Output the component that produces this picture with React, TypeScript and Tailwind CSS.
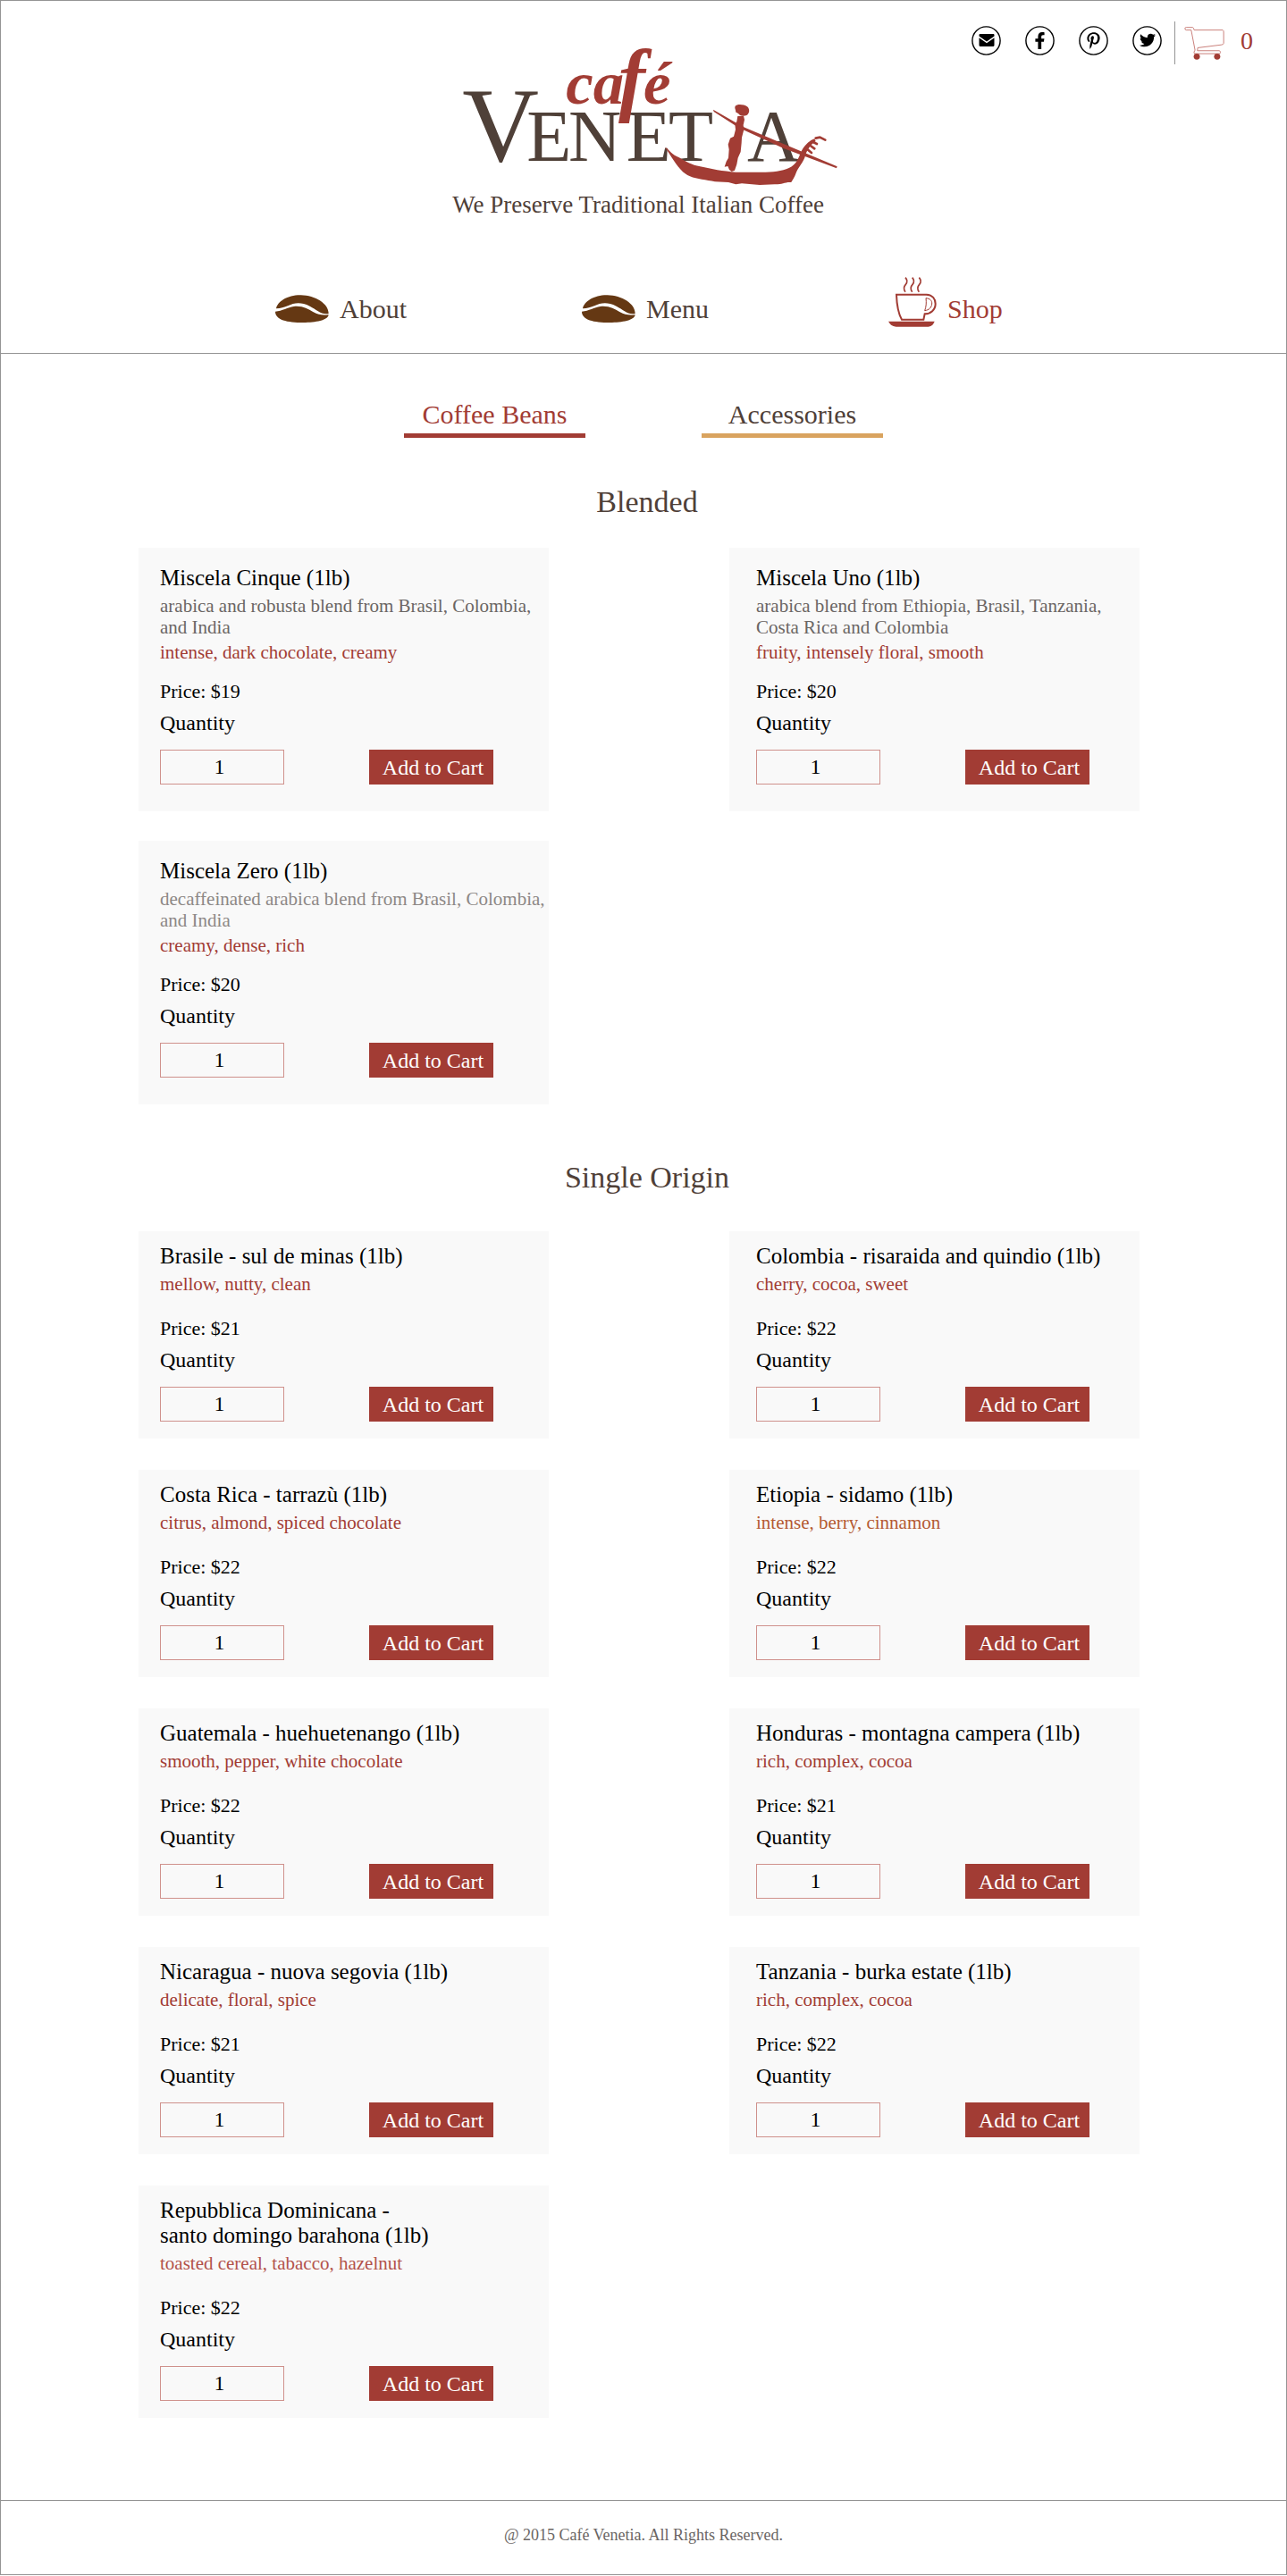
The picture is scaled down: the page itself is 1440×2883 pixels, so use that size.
import React from "react";
import { FaFacebookF, FaPinterestP, FaTwitter } from "react-icons/fa";

type Product = {
  id: string;
  name: string[];
  origin?: string[];
  originTone?: "dark" | "light";
  notes: string;
  notesTone?: "amber" | "soft";
  price: number;
};

const blended: Product[] = [
  {
    id: "cinque",
    name: ["Miscela Cinque (1lb)"],
    origin: ["arabica and robusta blend from Brasil, Colombia,", "and India"],
    notes: "intense, dark chocolate, creamy",
    price: 19,
  },
  {
    id: "uno",
    name: ["Miscela Uno (1lb)"],
    origin: ["arabica blend from Ethiopia, Brasil, Tanzania,", "Costa Rica and Colombia"],
    notes: "fruity, intensely floral, smooth",
    price: 20,
  },
  {
    id: "zero",
    name: ["Miscela Zero (1lb)"],
    origin: ["decaffeinated arabica blend from Brasil, Colombia,", "and India"],
    originTone: "light",
    notes: "creamy, dense, rich",
    price: 20,
  },
];

const singleOrigin: Product[] = [
  { id: "brasile", name: ["Brasile - sul de minas (1lb)"], notes: "mellow, nutty, clean", price: 21 },
  { id: "colombia", name: ["Colombia - risaraida and quindio (1lb)"], notes: "cherry, cocoa, sweet", price: 22 },
  { id: "costa-rica", name: ["Costa Rica - tarrazù (1lb)"], notes: "citrus, almond, spiced chocolate", price: 22 },
  { id: "etiopia", name: ["Etiopia - sidamo (1lb)"], notes: "intense, berry, cinnamon", notesTone: "amber", price: 22 },
  { id: "guatemala", name: ["Guatemala - huehuetenango (1lb)"], notes: "smooth, pepper, white chocolate", price: 22 },
  { id: "honduras", name: ["Honduras - montagna campera (1lb)"], notes: "rich, complex, cocoa", price: 21 },
  { id: "nicaragua", name: ["Nicaragua - nuova segovia (1lb)"], notes: "delicate, floral, spice", price: 21 },
  { id: "tanzania", name: ["Tanzania - burka estate (1lb)"], notes: "rich, complex, cocoa", price: 22 },
  {
    id: "dominicana",
    name: ["Repubblica Dominicana -", "santo domingo barahona (1lb)"],
    notes: "toasted cereal, tabacco, hazelnut",
    notesTone: "soft",
    price: 22,
  },
];

function Logo() {
  return (
    <svg viewBox="0 0 1380 540" className="block w-full" role="img" aria-label="Café Venetia">
      <g fill="#4f4038" fontFamily="'Liberation Serif', serif">
        <text x="82" y="450" fontSize="356">V</text>
        <g fontSize="246">
          <text x="298" y="450">E</text>
          <text x="438" y="450">N</text>
          <text x="632" y="450">E</text>
          <text x="774" y="450">T</text>
          <text x="1038" y="450">A</text>
        </g>
      </g>
      <text y="258" fontSize="206" fontWeight="700" fontStyle="italic" fill="#a23c34" fontFamily="'Liberation Serif', serif">
        <tspan x="430">ca</tspan>
        <tspan x="606" y="266" fontSize="270">
          f
        </tspan>
        <tspan x="690" y="258">
          é
        </tspan>
      </text>
      <g fill="#a23c34">
        <path d="M762 405 C772 407 781 425 800 434 C822 444 842 462 880 469 C920 478 955 485 1000 488 L1060 488 C1110 490 1150 487 1178 474 C1204 462 1210 440 1218 422 C1228 400 1244 384 1264 376 L1268 384 C1250 396 1240 412 1234 430 C1228 455 1212 468 1203 488 C1196 508 1190 514 1186 522 C1165 520 1155 530 1130 529 L1080 531 L1020 526 L1000 529 L975 522 L930 520 C900 514 870 512 846 502 C808 486 790 442 762 405Z" />
        <path d="M924 278 L1000 322 L1030 338 L1165 395 L1340 469 L1338 475 L1160 408 L1028 347 L996 330 L926 285Z" />
        <path d="M998 266 C1004 258 1028 260 1038 268 C1048 276 1046 292 1036 297 C1028 301 1012 300 1009 292 L999 286 C1002 280 994 274 998 266Z" />
        <path d="M1006 300 L1026 299 L1029 312 L1025 330 L1027 345 L1020 372 L1019 390 L1016 420 L1007 440 L1003 462 L996 482 L986 486 L978 480 L973 468 L962 470 L968 452 L975 440 L977 412 L974 395 L981 374 L993 368 L999 345 L997 328 L1003 318Z" />
        <g fill="none" stroke="#a23c34" strokeWidth="8" strokeLinecap="round">
          <path d="M1268 374 L1282 371 L1300 380" />
          <path d="M1254 385 L1272 393" />
          <path d="M1246 396 L1264 409" />
          <path d="M1236 408 L1254 423" />
        </g>
      </g>
    </svg>
  );
}

function BeanIcon() {
  return (
    <svg viewBox="0 0 180 93" className="mb-[5px] block h-[31px] w-[60px]" fill="#653813" aria-hidden="true">
      <path d="M3 46 C8 22 42 0 86 1 C134 2 180 30 179 63 C152 67 140 50 116 38 C84 22 62 28 44 36 C30 42 18 45 3 46Z" />
      <path d="M0 56 C24 54 42 42 62 39 C92 36 108 47 128 58 C144 67 158 69 179 67 C176 86 136 93 94 93 C40 93 0 84 0 56Z" />
    </svg>
  );
}

function CupIcon() {
  return (
    <svg viewBox="0 0 162 168" className="block h-[56px] w-[54px]" fill="none" stroke="#a23c34" aria-hidden="true">
      <path d="M57 2 C66 12 64 18 58 25 C50 34 51 42 57 50" strokeWidth="5" />
      <path d="M80 2 C89 12 87 18 81 25 C73 34 74 42 80 50" strokeWidth="5" />
      <path d="M103 2 C112 12 110 18 104 25 C96 34 97 42 103 50" strokeWidth="5" />
      <path d="M27 59 L128 59 C148 60 158 74 158 90 C158 110 142 124 122 124 L118 143 L45 143 C32 120 28 90 27 59Z" strokeWidth="6" />
      <path d="M126 71 C140 72 147 80 146 90 C145 103 136 111 122 113 C127 100 128 86 126 71Z" strokeWidth="3" />
      <path d="M0 149 L155 149 C152 158 146 165 134 167 L26 167 C12 165 4 158 0 149Z" fill="#a23c34" stroke="none" />
    </svg>
  );
}

function CartIcon() {
  return (
    <svg viewBox="0 0 135 112" className="block h-[37px] w-[45px]" fill="none" stroke="#c9807a" strokeWidth="3" aria-hidden="true">
      <path d="M2 5 Q2 2 6 2 L28 2 Q31 2 33 11 L130 11 Q133 12 133 18 L133 56 Q132 60 126 61 L45 71 L44 81 L118 81 Q122 82 122 86 Q122 91 118 91 L34 91 Q30 86 36 79 L23 11 L6 11 Q2 11 2 5Z" />
      <circle cx="42" cy="101" r="10.5" fill="#a23c34" stroke="none" />
      <circle cx="111" cy="101" r="10.5" fill="#a23c34" stroke="none" />
    </svg>
  );
}

function MailGlyph() {
  return (
    <svg viewBox="0 0 18 14" className="h-[14px] w-[18px]" aria-hidden="true">
      <path d="M1.5 0 H16.5 Q17.5 0 17.5 1.2 V2.6 L9 8.6 L0.5 2.6 V1.2 Q0.5 0 1.5 0Z M0.5 4.2 L9 10.2 L17.5 4.2 V12.5 Q17.5 14 16 14 H2 Q0.5 14 0.5 12.5Z" />
    </svg>
  );
}

function SocialLink({ label, children }: { label: string; children: React.ReactNode }) {
  return (
    <a href="#" aria-label={label} className="grid size-[33px] place-items-center text-black">
      <svg viewBox="0 0 33 33" className="col-start-1 row-start-1 size-[33px]" fill="none" stroke="black" strokeWidth="1.4" aria-hidden="true">
        <circle cx="16.5" cy="16.5" r="15.6" />
      </svg>
      <span className="col-start-1 row-start-1">{children}</span>
    </a>
  );
}

function SiteHeader() {
  return (
    <header className="border-b border-[#949494] pb-[29px]">
      <div className="grid grid-cols-[1fr_460px_1fr]">
        <div />
        <div className="pt-[29px]">
          <a href="#" className="block">
            <Logo />
          </a>
          <p className="mt-[3px] pr-3 text-center text-[27px] leading-8 whitespace-nowrap text-[#4f4038]">
            We Preserve Traditional Italian Coffee
          </p>
        </div>
        <div className="mt-[23px] flex h-12 items-center justify-end pr-[37px]">
          <div className="flex items-center gap-[27px] pb-[6px]">
            <SocialLink label="Email">
              <MailGlyph />
            </SocialLink>
            <SocialLink label="Facebook">
              <FaFacebookF size={19} />
            </SocialLink>
            <SocialLink label="Pinterest">
              <FaPinterestP size={19} />
            </SocialLink>
            <SocialLink label="Twitter">
              <FaTwitter size={18} />
            </SocialLink>
          </div>
          <a href="#" aria-label="Cart, 0 items" className="ml-[14px] flex h-12 items-center border-l border-[#949494] pl-[10px]">
            <CartIcon />
            <span className="ml-[18px] pb-1 text-[28px] leading-8 text-[#a23c34]">0</span>
          </a>
        </div>
      </div>
      <nav className="mt-[65px] grid grid-cols-3 pr-[102px] pl-[307px] text-[30px] leading-9 text-[#4f4038]">
        <a href="#" className="flex h-[56px] items-end gap-3">
          <BeanIcon />
          <span className="mb-[2px]">About</span>
        </a>
        <a href="#" className="flex h-[56px] items-end gap-3">
          <BeanIcon />
          <span className="mb-[2px]">Menu</span>
        </a>
        <a href="#" aria-current="page" className="flex h-[56px] items-end gap-3 text-[#a23c34]">
          <CupIcon />
          <span className="mb-[2px]">Shop</span>
        </a>
      </nav>
    </header>
  );
}

function ProductCard({ product }: { product: Product }) {
  const detailed = Boolean(product.origin);
  const notesColor =
    product.notesTone === "amber" ? "text-[#b45a32]" : product.notesTone === "soft" ? "text-[#b3524a]" : "text-[#a23c34]";
  const inputId = `qty-${product.id}`;

  return (
    <article
      className={`bg-[#f9f9f9] pl-[24px] whitespace-nowrap text-black even:pl-[30px] ${
        detailed ? "pt-[20px] pb-[30px]" : "pt-[14px] pb-[19px]"
      }`}
    >
      <h3 className="text-[25px] leading-7">
        {product.name.map((line) => (
          <span key={line} className="block">
            {line}
          </span>
        ))}
      </h3>
      {product.origin && (
        <p
          className={`mt-[5px] text-[21px] leading-6 ${
            product.originTone === "light" ? "text-[#8d8886]" : "text-[#6b6664]"
          }`}
        >
          {product.origin.map((line) => (
            <span key={line} className="block">
              {line}
            </span>
          ))}
        </p>
      )}
      <p className={`text-[21px] leading-6 ${detailed ? "mt-1" : "mt-[5px]"} ${notesColor}`}>{product.notes}</p>
      <p className={`text-[22px] leading-6 ${detailed ? "mt-5" : "mt-[26px]"}`}>Price: ${product.price}</p>
      <label htmlFor={inputId} className="mt-[9px] block text-[24px] leading-7">
        Quantity
      </label>
      <div className="mt-4 flex gap-[95px]">
        <input
          id={inputId}
          type="text"
          inputMode="numeric"
          defaultValue="1"
          className="h-[39px] w-[139px] border border-[#cf918c] bg-transparent pr-[6px] text-center text-[24px] leading-7"
        />
        <button type="button" className="h-[39px] w-[139px] bg-[#a23c34] pl-1 text-[24px] leading-7 text-white">
          Add to Cart
        </button>
      </div>
    </article>
  );
}

function ProductSection({
  title,
  products,
  className,
  gridClassName,
}: {
  title: string;
  products: Product[];
  className: string;
  gridClassName: string;
}) {
  return (
    <section className={className}>
      <h2 className="pl-2 text-center text-[34px] leading-10 text-[#4f4038]">{title}</h2>
      <div className={`grid grid-cols-2 gap-x-[202px] pr-[164px] pl-[154px] ${gridClassName}`}>
        {products.map((product) => (
          <ProductCard key={product.id} product={product} />
        ))}
      </div>
    </section>
  );
}

export default function App() {
  return (
    <div className="border border-[#949494] bg-white font-['Liberation_Serif',serif]">
      <SiteHeader />
      <main className="pb-[92px]">
        <nav aria-label="Product categories" className="mt-[50px] flex justify-center gap-[130px] text-[30px] leading-9">
          <a href="#" aria-current="page" className="w-[203px] border-b-[5px] border-[#a23c34] pb-[3px] text-center text-[#a23c34]">
            Coffee Beans
          </a>
          <a href="#" className="w-[203px] border-b-[5px] border-[#d9a35f] pb-[3px] text-center text-[#4f4038]">
            Accessories
          </a>
        </nav>
        <ProductSection title="Blended" products={blended} className="mt-[52px]" gridClassName="mt-[31px] gap-y-[33px]" />
        <ProductSection
          title="Single Origin"
          products={singleOrigin}
          className="mt-[62px]"
          gridClassName="mt-[40px] gap-y-[35px]"
        />
      </main>
      <footer className="border-t border-[#949494] pt-[26px] pb-8 text-center text-[18px] leading-6 text-[#6b6664]">
        @ 2015 Café Venetia. All Rights Reserved.
      </footer>
    </div>
  );
}
